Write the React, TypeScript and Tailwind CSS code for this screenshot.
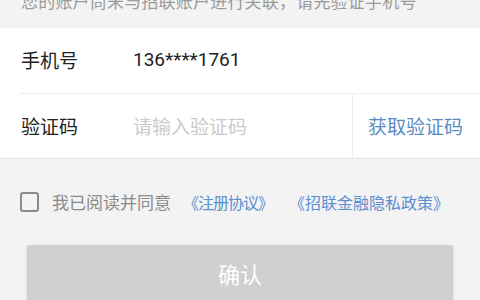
export default function App() {
  return (
    <div
      className="w-[480px] h-[300px] overflow-hidden bg-[#f3f3f3]"
      style={{ fontFamily: '"Noto Sans CJK SC", "Noto Sans", sans-serif' }}
    >
      <div className="h-[28px] overflow-hidden pl-[21px]">
        <p className="mt-[-11px] text-[17px] tracking-[0.2px] leading-[24px] text-[#9a9a9a] whitespace-nowrap">
          您的账户尚未与招联账户进行关联，请先验证手机号
        </p>
      </div>

      <div className="bg-white border-b border-[#e6e6e6]">
        <div className="flex items-center h-[65px] pl-[21px] text-[19px]">
          <span className="w-[112px] text-[#222]">手机号</span>
          <span
            className="text-[#222] text-[19px] pb-[1px]"
            style={{ fontFamily: 'Roboto, "Noto Sans", sans-serif' }}
          >
            136****1761
          </span>
        </div>
        <div className="ml-[20px] border-t border-[#ececec] flex items-stretch h-[65px]">
          <div className="flex-1 flex items-center text-[19px]">
            <span className="pl-[1px] w-[113px] text-[#222]">验证码</span>
            <span className="text-[#cacaca]">请输入验证码</span>
          </div>
          <div className="w-[128px] border-l border-[#ececec] flex items-center pl-[15px] text-[19px] text-[#5a8cc4]">
            获取验证码
          </div>
        </div>
      </div>

      <div className="flex items-center h-[86px] pl-[20px] text-[17px]">
        <span className="w-[19px] h-[20px] border-2 border-[#8a8a8a] rounded-[3px] mr-[13px]" />
        <span className="text-[#8a8a8a]">我已阅读并同意</span>
        <span className="ml-[12px] text-[16px] tracking-[-1px] text-[#5a8fd0]">《注册协议》</span>
        <span className="ml-[16px] text-[16px] text-[#5a8fd0]">《招联金融隐私政策》</span>
      </div>

      <div className="px-[27px]">
        <button className="w-full h-[56px] bg-[#d0d0d0] rounded-[2px] shadow-[0_1px_3px_rgba(0,0,0,0.15)] text-white text-[22px]">
          确认
        </button>
      </div>
    </div>
  )
}
